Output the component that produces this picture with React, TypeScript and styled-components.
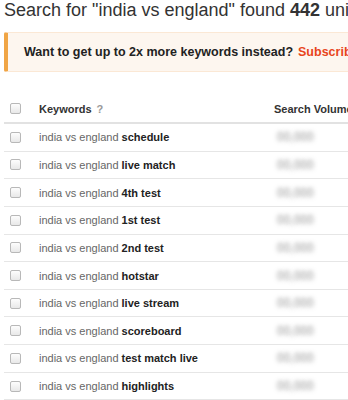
import React from "react";
import styled, { createGlobalStyle } from "styled-components";

const Global = createGlobalStyle`
  html, body { margin: 0; padding: 0; background: #fff; overflow: hidden; }
  body { font-family: "Liberation Sans", Arial, sans-serif; }
`;

const Page = styled.div`
  width: 348px;
  height: 400px;
  overflow: hidden;
  padding: 0 0 0 4px;
  box-sizing: border-box;
`;

const Title = styled.h1`
  margin: 0;
  font-size: 18px;
  line-height: 21px;
  font-weight: normal;
  color: #333;
  white-space: nowrap;
  b { font-weight: bold; }
`;

const Banner = styled.div`
  margin-top: 11px;
  width: 420px;
  height: 40px;
  box-sizing: border-box;
  background: #fdf6ef;
  border: 1px solid #fbe8d5;
  border-left: 4px solid #f0a545;
  border-radius: 2px;
  display: flex;
  align-items: center;
  padding-left: 16px;
  font-size: 12.5px;
  font-weight: bold;
  color: #222;
  white-space: nowrap;
`;

const Sub = styled.span`
  color: #e8451c;
  margin-left: 5px;
`;

const Table = styled.div`
  margin-top: 23px;
  width: 420px;
`;

const Row = styled.div<{ $head?: boolean }>`
  display: grid;
  grid-template-columns: 35px 235px 1fr;
  align-items: center;
  height: ${(p) => (p.$head ? "29px" : "27.65px")};
  box-sizing: border-box;
  border-bottom: ${(p) => (p.$head ? "2px solid #e2e2e2" : "1px solid #e6e6e6")};
  font-size: 11px;
  white-space: nowrap;
`;

const Check = styled.span`
  width: 11px;
  height: 11px;
  margin-left: 6px;
  box-sizing: border-box;
  border: 1px solid #b8b8b8;
  border-radius: 2px;
  background: linear-gradient(#fdfdfd, #e8e8e8);
`;

const HeadText = styled.span`
  font-weight: bold;
  color: #333;
  font-size: 11px;
`;

const Q = styled.span`
  color: #999;
  font-weight: bold;
  margin-left: 5px;
`;

const Kw = styled.span`
  color: #666;
  b { color: #222; font-weight: bold; }
`;

const Vol = styled.span`
  color: transparent;
  text-shadow: 0 0 4px rgba(120, 120, 120, 0.8);
  font-size: 12px;
  padding-left: 3px;
`;

const rows = [
  "schedule",
  "live match",
  "4th test",
  "1st test",
  "2nd test",
  "hotstar",
  "live stream",
  "scoreboard",
  "test match live",
  "highlights",
];

export default function App() {
  return (
    <Page>
      <Global />
      <Title>
        Search for "india vs england" found <b>442</b> unique keywords
      </Title>
      <Banner>
        Want to get up to 2x more keywords instead?<Sub>Subscribe</Sub>
      </Banner>
      <Table>
        <Row $head>
          <Check />
          <HeadText>
            Keywords<Q>?</Q>
          </HeadText>
          <HeadText>Search Volume</HeadText>
        </Row>
        {rows.map((r) => (
          <Row key={r}>
            <Check />
            <Kw>
              india vs england <b>{r}</b>
            </Kw>
            <Vol>00,000</Vol>
          </Row>
        ))}
      </Table>
    </Page>
  );
}
